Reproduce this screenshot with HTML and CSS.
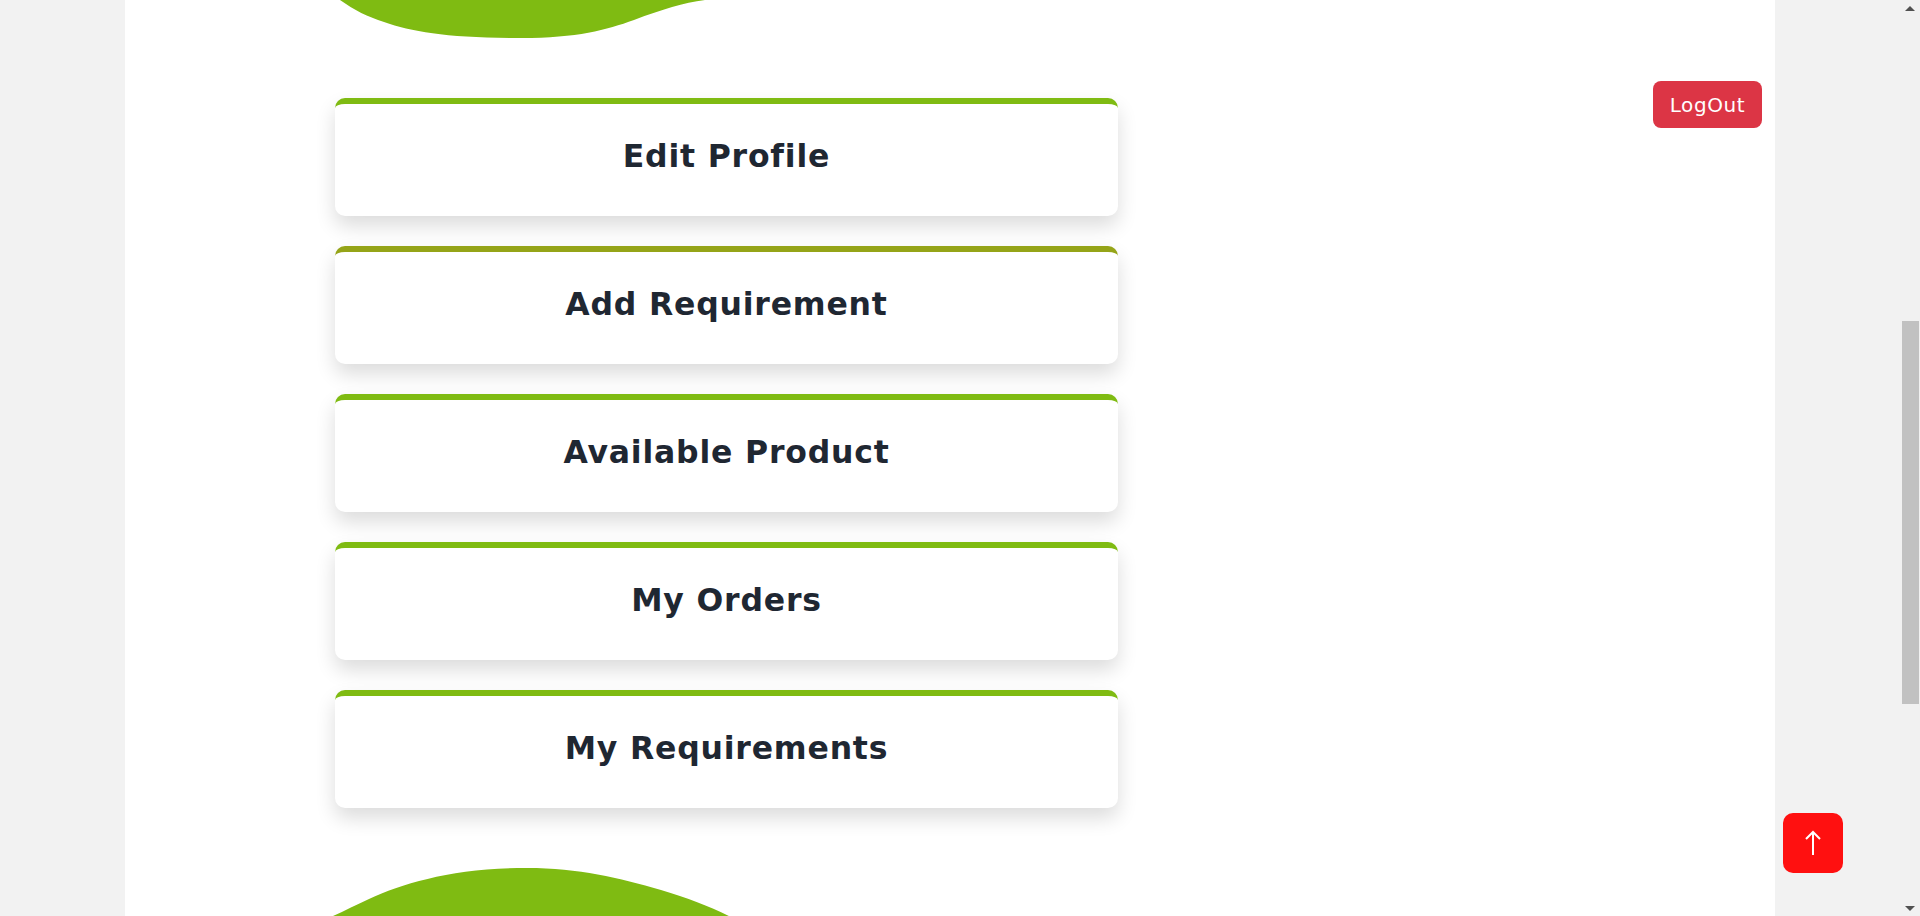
FILE: index.html
```html
<!DOCTYPE html>
<html lang="en">
<head>
<meta charset="utf-8">
<title>Dashboard</title>
<link rel="stylesheet" href="styles.css">
</head>
<body>
<div class="page">
  <div class="container">
    <svg class="blob-top" width="380" height="40" viewBox="0 0 380 40" aria-hidden="true">
      <path d="M2,0 C16,10 30,17 46,22 C75,32 110,38 183,38 C240,38 268,30 296,20 C325,9 345,3 367,0 Z" fill="#7fbb12"/>
    </svg>
    <div class="content">
      <div class="cards">
        <a class="card" href="#">Edit Profile</a>
        <a class="card card-active" href="#">Add Requirement</a>
        <a class="card" href="#">Available Product</a>
        <a class="card" href="#">My Orders</a>
        <a class="card" href="#">My Requirements</a>
      </div>
      <button class="logout" type="button">LogOut</button>
    </div>
    <svg class="blob-bottom" width="420" height="60" viewBox="0 0 420 60" aria-hidden="true">
      <path d="M0,52 C14,46 30,38 45,31 C80,15 130,0 203,0 C255,0 295,10 337,22 C370,32 395,42 420,56 L420,60 L0,60 Z" fill="#7fbb12"/>
    </svg>
  </div>
  <a class="to-top" href="#" aria-label="Back to top">
    <svg width="20" height="26" viewBox="0 0 20 26" aria-hidden="true">
      <path d="M10,2 L10,25 M3,9 L10,2 L17,9" fill="none" stroke="#fff" stroke-width="2"/>
    </svg>
  </a>
</div>
<div class="scrollbar" aria-hidden="true">
  <span class="sb-arrow sb-up"></span>
  <span class="sb-thumb"></span>
  <span class="sb-arrow sb-down"></span>
</div>
</body>
</html>
```

FILE: styles.css
```css
html, body {
  margin: 0;
  padding: 0;
  height: 916px;
  overflow: hidden;
}

body {
  display: flex;
  background: #f2f2f2;
  font-family: "DejaVu Sans", "Liberation Sans", sans-serif;
}

.page {
  flex: 1;
  height: 916px;
  overflow: hidden;
}

.container {
  width: 1650px;
  height: 916px;
  margin: 0 auto;
  background: #ffffff;
  overflow: hidden;
}

.blob-top {
  display: block;
  margin-left: 213px;
  height: 40px;
}

.content {
  display: flex;
  justify-content: space-between;
  align-items: flex-start;
  padding: 0 13px 0 210px;
  margin-top: 41px;
}

.cards {
  display: flex;
  flex-direction: column;
  gap: 30px;
  width: 783px;
  margin-top: 17px;
}

.card {
  box-sizing: border-box;
  height: 118px;
  display: flex;
  align-items: center;
  justify-content: center;
  padding-bottom: 8px;
  background: #ffffff;
  border-top: 6px solid #7fbb12;
  border-radius: 10px;
  box-shadow: 0 10px 20px rgba(0, 0, 0, 0.14);
  color: #1f2732;
  text-decoration: none;
  font-size: 31.5px;
  font-weight: 700;
  letter-spacing: 0.8px;
}

.card-active {
  border-top-color: #95a418;
}

.logout {
  box-sizing: border-box;
  width: 109px;
  height: 47px;
  padding: 0;
  border: none;
  border-radius: 8px;
  background: #dc3545;
  color: #ffffff;
  font-family: "DejaVu Sans", "Liberation Sans", sans-serif;
  font-size: 20px;
  letter-spacing: 0.6px;
  cursor: pointer;
}

.blob-bottom {
  display: block;
  margin-left: 199px;
  margin-top: 60px;
}

.to-top {
  position: fixed;
  right: 77px;
  bottom: 43px;
  width: 60px;
  height: 60px;
  border-radius: 10px;
  background: #ff1010;
  display: flex;
  align-items: center;
  justify-content: center;
}

.scrollbar {
  width: 20px;
  height: 916px;
  background: #f1f1f1;
  display: flex;
  flex-direction: column;
  align-items: center;
}

.sb-arrow {
  width: 0;
  height: 0;
  border-left: 5px solid transparent;
  border-right: 5px solid transparent;
}

.sb-up {
  margin-top: 6px;
  border-bottom: 5px solid #505050;
}

.sb-down {
  margin-top: auto;
  margin-bottom: 5px;
  border-top: 5px solid #505050;
}

.sb-thumb {
  width: 17px;
  height: 383px;
  margin-top: 310px;
  margin-left: 1px;
  background: #c1c1c1;
}
```
